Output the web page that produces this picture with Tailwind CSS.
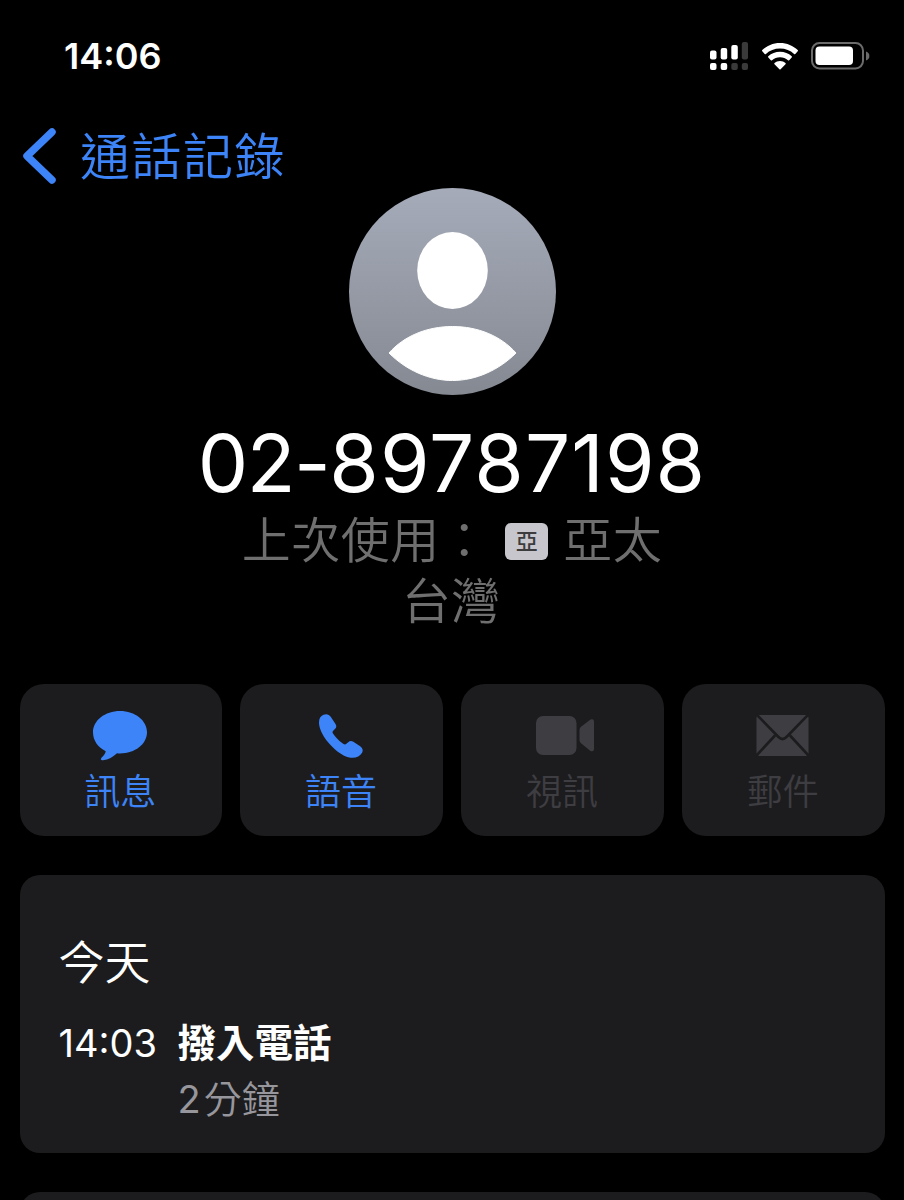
<!DOCTYPE html>
<html lang="zh-Hant">

<head>
  <meta charset="UTF-8">
  <meta name="viewport" content="width=device-width, initial-scale=1.0">
  <script src="https://cdn.jsdelivr.net/npm/@tailwindcss/browser@4"></script>
  <title>通話記錄</title>
</head>

<body class="bg-black text-white h-screen overflow-hidden font-['Inter','Noto_Sans_CJK_TC',sans-serif]">
  <!-- status bar -->
  <header class="flex items-center justify-between h-28 pl-16 pr-[34px]">
    <span class="text-[36px] leading-none font-semibold">14:06</span>
    <div class="flex items-center">
      <svg class="w-[38px] h-7" viewBox="0 0 38 28" fill="#fff">
        <rect x="0" y="8.5" width="6.5" height="9" rx="2" />
        <rect x="10.7" y="6" width="6.5" height="11.5" rx="2" />
        <rect x="21.3" y="3" width="6.5" height="14.5" rx="2" />
        <rect x="31.8" y="0" width="6.2" height="17.5" rx="2" fill="#3a3a3a" />
        <rect x="0" y="21" width="6.5" height="7" rx="2" />
        <rect x="10.7" y="21" width="6.5" height="7" rx="2" />
        <rect x="21.3" y="21" width="6.5" height="7" rx="2" fill="#3a3a3a" />
        <rect x="31.8" y="21" width="6.2" height="7" rx="2" fill="#3a3a3a" />
      </svg>
      <svg class="w-9 h-[27px] ml-[14px]" viewBox="0 0 36 27" fill="#fff">
        <path d="M18 0C25 0 31.200 2.700 35.700 7.100Q36.300 7.700 35.700 8.300L33.300 10.900Q32.700 11.500 32.100 10.900C28.300 7.400 23.500 5.500 18 5.500S7.700 7.400 3.900 10.900Q3.300 11.500 2.700 10.900L.3 8.300Q-.3 7.700 .3 7.100C4.800 2.700 11 0 18 0Z" />
        <path d="M18 8.800C22.500 8.800 26.600 10.500 29.700 13.300Q30.300 13.900 29.700 14.500L27.200 17.200Q26.600 17.800 26 17.200C23.800 15.300 21.100 14.200 18 14.200S12.200 15.300 10 17.200Q9.400 17.800 8.800 17.200L6.300 14.500Q5.700 13.900 6.300 13.300C9.400 10.500 13.500 8.800 18 8.800Z" />
        <path d="M18 18C20.200 18 22.100 18.800 23.500 20Q24.100 20.600 23.500 21.200L18.600 26.200Q18 26.800 17.400 26.200L12.500 21.200Q11.900 20.600 12.500 20C13.900 18.800 15.800 18 18 18Z" />
      </svg>
      <svg class="w-[59px] h-7 ml-[13px]" viewBox="0 0 59 28">
        <rect x="1" y="1" width="51" height="25.500" rx="7.500" fill="none" stroke="#6b6b6b" stroke-width="2" />
        <rect x="4.500" y="4.500" width="37.500" height="18.500" rx="4" fill="#fff" />
        <path d="M55 9.500C59.500 11 59.500 17 55 18.500Z" fill="#6b6b6b" />
      </svg>
    </div>
  </header>

  <!-- back navigation -->
  <nav class="flex items-center h-16 mt-3 pl-[23px] text-[#3c84f7]">
    <svg class="w-[34px] h-14" viewBox="0 0 34 56" fill="none" stroke="currentColor" stroke-width="7.500" stroke-linecap="round" stroke-linejoin="round">
      <path d="M29 4L4 28L29 52" />
    </svg>
    <span class="ml-[23px] pt-px text-[50px] leading-none tracking-[1.5px] font-[350]">通話記錄</span>
  </nav>

  <section class="flex flex-col items-center">
    <svg class="w-[207px] h-[207px]" viewBox="0 0 207 207">
      <defs>
        <linearGradient id="avatar" x1="0" y1="0" x2="0" y2="1">
          <stop offset="0" stop-color="#a5abb9" />
          <stop offset="1" stop-color="#858992" />
        </linearGradient>
      </defs>
      <circle cx="103.500" cy="103.500" r="103.500" fill="url(#avatar)" />
      <ellipse cx="103.500" cy="82.500" rx="35.300" ry="38.500" fill="#fff" />
      <path d="M40 165C55 148 78 138.500 103.500 138.500S152 148 167 165C150 182 127 192.500 103.500 192.500S57 182 40 165Z" fill="#fff" stroke="#fff" stroke-linejoin="round" />
    </svg>
    <h1 class="mt-7 h-20 text-[80px] leading-[80px] font-normal [font-feature-settings:'calt'_0]"><span class="tracking-[-1.5px]">02-</span><span class="tracking-[1.1px]">89787198</span></h1>
    <div class="flex items-center mt-2 h-[60px] text-[49px] leading-[60px] text-[#6f6f70] font-[350] whitespace-nowrap">
      <span class="tracking-[0.5px]">上次使用：</span>
      <span class="flex items-center justify-center w-[43px] h-[37px] ml-4 mr-[15px] rounded-md bg-[#c7c6cc] text-[#3c3c3e] text-[22px] leading-none font-medium">亞</span>
      <span class="tracking-[0.5px]">亞太</span>
    </div>
    <div class="h-[60px] pr-[2px] text-[49px] leading-[62px] text-[#6f6f70] font-[350]">台灣</div>
  </section>

  <!-- contact actions -->
  <div class="grid grid-cols-4 gap-[18.5px] mt-[53px] px-[19.5px] text-[36px] leading-[44px] font-[350]">
    <button class="flex flex-col items-center h-[152px] pt-[26px] rounded-3xl bg-[#1c1c1e] text-[#3c84f7]">
      <svg class="w-[54px] h-[51px] mr-[2px]" viewBox="0 0 54 51" fill="currentColor">
        <path d="M27 1C42 1 54 10.500 54 22.300S42 43.500 27 43.500Q25.500 43.500 24 43.300C20 47 15.500 49.800 10 50.300C7.500 50.300 7.300 48.800 9 47.200C11 45.200 12.500 43.200 12.700 41.200C5 37.500 0 30.500 0 22.300C0 10.500 12 1 27 1Z" />
      </svg>
      <span class="mt-[9px] mr-px">訊息</span>
    </button>
    <button class="flex flex-col items-center h-[152px] pt-[26px] rounded-3xl bg-[#1c1c1e] text-[#3c84f7]">
      <svg class="w-[54px] h-[51px] mr-[2px]" viewBox="0 0 54 51" fill="currentColor">
        <path d="M9.500 4.700C12.500 3.500 15 4.200 16.700 6.800L21.500 14C22.800 16 22.500 17.500 20.900 19.100L19.200 20.700C18.300 21.600 18.300 22.300 19 23.500C21 26.800 26.300 32 29.500 34C30.600 34.700 31.500 34.600 32.400 33.800L34.200 32.200C35.800 30.700 37.400 30.500 39.300 31.700L46.200 36.200C48.700 37.900 49.300 40.200 48.200 42.600C46 46.800 41.500 48.300 36.500 47.700C28 46.500 19 38.500 13 31C8.500 25 5 18.300 5 12.500C5 8.500 6.500 5.900 9.500 4.700Z" />
      </svg>
      <span class="mt-[9px] mr-px">語音</span>
    </button>
    <button class="flex flex-col items-center h-[152px] pt-[26px] rounded-3xl bg-[#1c1c1e] text-[#3e3d42]">
      <svg class="w-[58px] h-[51px] ml-[5px]" viewBox="0 0 58 51" fill="currentColor">
        <rect x="0" y="6" width="40.500" height="39" rx="7" />
        <path d="M43.500 20Q43.500 18 45 16.800L54.500 9.500Q58 8.500 58 11.500V39Q58 42 54.500 41L45 33.200Q43.500 32 43.500 30Z" />
      </svg>
      <span class="mt-[9px] mr-px">視訊</span>
    </button>
    <button class="flex flex-col items-center h-[152px] pt-[26px] rounded-3xl bg-[#1c1c1e] text-[#3e3d42]">
      <svg class="w-[53px] h-[51px] mr-px" viewBox="0 0 53 51">
        <rect x="0.500" y="5" width="52" height="41" rx="3" fill="currentColor" />
        <path d="M0 4L22.500 27Q26.500 31 30.500 27L53 4M0 46L19 25.500M53 46L34 25.500" fill="none" stroke="#1c1c1e" stroke-width="2.600" />
      </svg>
      <span class="mt-[9px] mr-px">郵件</span>
    </button>
  </div>

  <!-- call history -->
  <section class="mt-[39px] mx-[19.5px] h-[278px] pl-[39px] pt-[57px] rounded-[20px] bg-[#1c1c1e]">
    <h2 class="text-[46px] leading-[60px] font-[350]">今天</h2>
    <div class="flex mt-[23px] text-[38px] leading-[56px]">
      <span class="w-[119px]">14:03</span>
      <div>
        <p class="text-[38.5px] font-bold">撥入電話</p>
        <p class="text-[#97969c]">2<span class="ml-[3px] font-[350]">分鐘</span></p>
      </div>
    </div>
  </section>

  <section class="mt-[39px] mx-[19.5px] h-[278px] rounded-[20px] bg-[#1c1c1e]"></section>
</body>

</html>
